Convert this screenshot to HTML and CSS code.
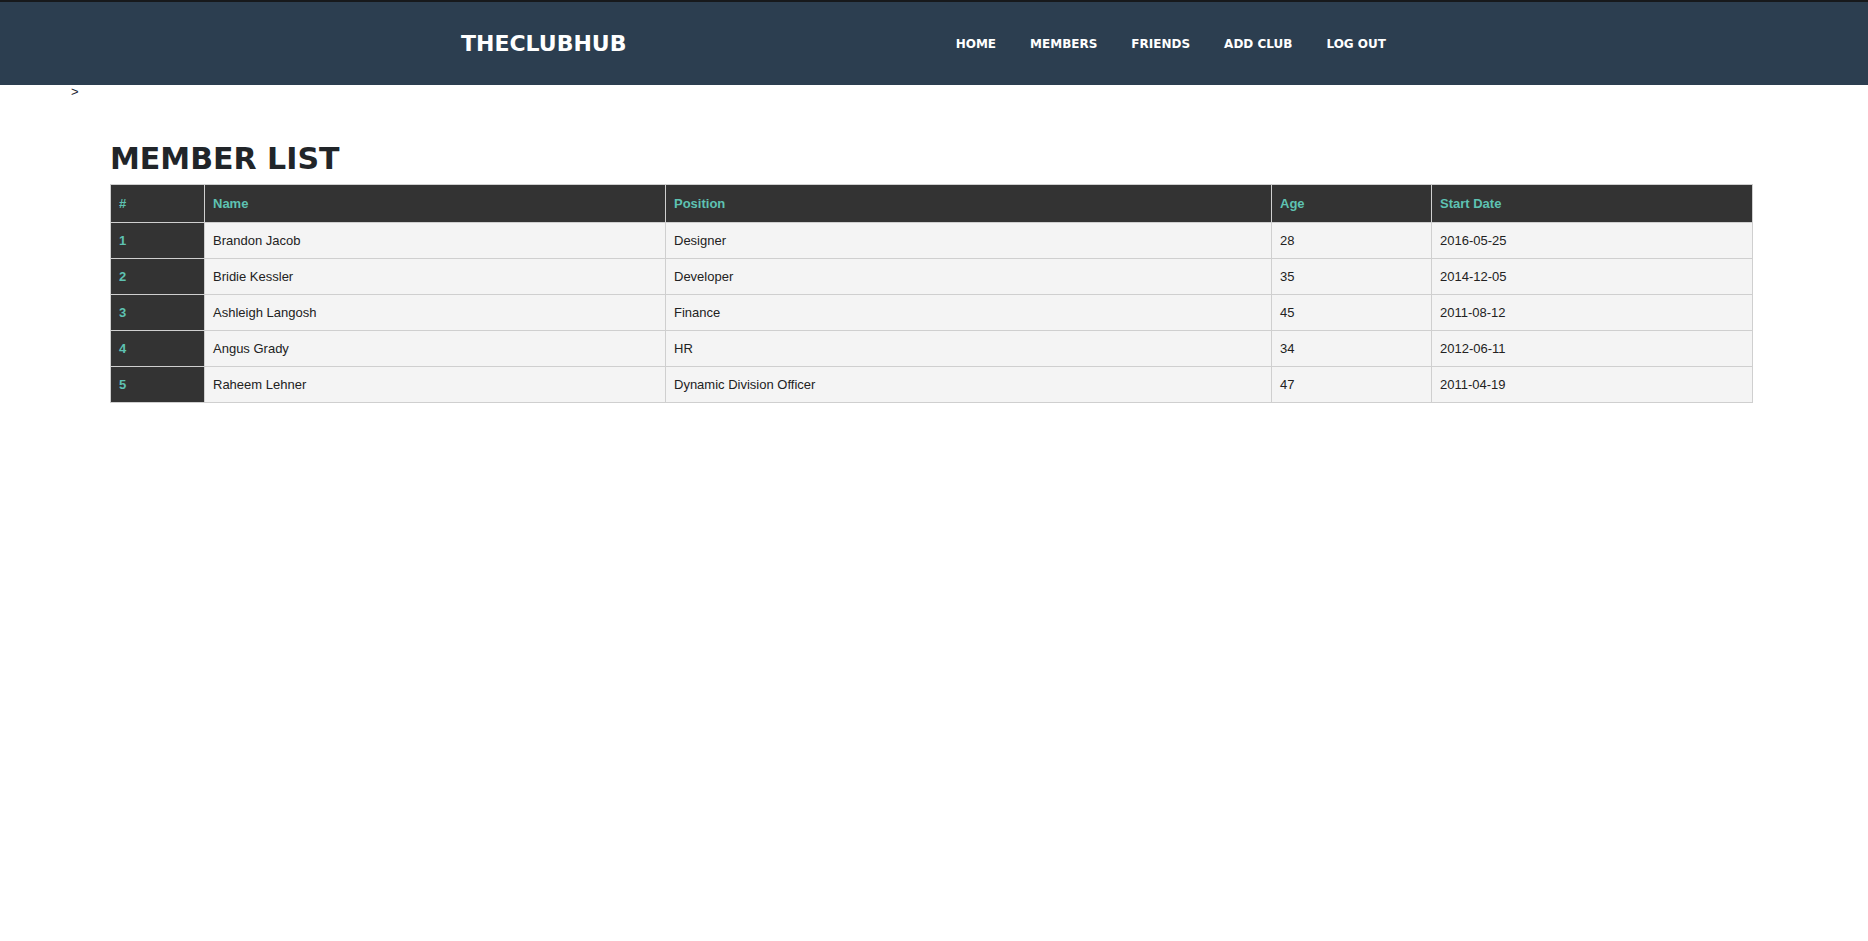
FILE: index.html
```html
<!DOCTYPE html>
<html lang="en">
<head>
<meta charset="utf-8">
<title>TheClubHub - Members</title>
<link rel="stylesheet" href="styles.css">
</head>
<body>
<header class="topbar">
  <div class="topbar-inner">
    <a class="brand" href="#">THECLUBHUB</a>
    <nav class="nav">
      <a href="#">HOME</a>
      <a href="#">MEMBERS</a>
      <a href="#">FRIENDS</a>
      <a href="#">ADD CLUB</a>
      <a href="#">LOG OUT</a>
    </nav>
  </div>
</header>
<div class="stray">&gt;</div>
<main class="content">
  <h1 class="title">MEMBER LIST</h1>
  <table class="members">
    <colgroup>
      <col class="c-num">
      <col class="c-name">
      <col class="c-pos">
      <col class="c-age">
      <col class="c-date">
    </colgroup>
    <thead>
      <tr><th>#</th><th>Name</th><th>Position</th><th>Age</th><th>Start Date</th></tr>
    </thead>
    <tbody>
      <tr><th>1</th><td>Brandon Jacob</td><td>Designer</td><td>28</td><td>2016-05-25</td></tr>
      <tr><th>2</th><td>Bridie Kessler</td><td>Developer</td><td>35</td><td>2014-12-05</td></tr>
      <tr><th>3</th><td>Ashleigh Langosh</td><td>Finance</td><td>45</td><td>2011-08-12</td></tr>
      <tr><th>4</th><td>Angus Grady</td><td>HR</td><td>34</td><td>2012-06-11</td></tr>
      <tr><th>5</th><td>Raheem Lehner</td><td>Dynamic Division Officer</td><td>47</td><td>2011-04-19</td></tr>
    </tbody>
  </table>
</main>
</body>
</html>
```
FILE: styles.css
```css
html, body {
  margin: 0;
  padding: 0;
  background: #ffffff;
}

body {
  font-family: "Liberation Sans", Arial, sans-serif;
  color: #222;
}

.topbar {
  background: #2c3e50;
  border-top: 2px solid #17191c;
  height: 83px;
}

.topbar-inner {
  width: 960px;
  height: 100%;
  margin: 0 auto;
  padding: 0 7px;
  box-sizing: border-box;
  display: flex;
  align-items: center;
}

.brand {
  font-family: "DejaVu Sans", sans-serif;
  font-weight: bold;
  font-size: 22px;
  color: #ffffff;
  text-decoration: none;
}

.nav {
  margin-left: auto;
  display: flex;
  gap: 34px;
  padding-right: 21px;
}

.nav a {
  font-family: "DejaVu Sans", sans-serif;
  font-weight: bold;
  font-size: 12px;
  color: #ffffff;
  text-decoration: none;
}

.stray {
  font-size: 13px;
  line-height: 13px;
  padding-left: 71px;
  color: #1b2430;
}

.content {
  padding: 0 116px 0 110px;
}

.title {
  font-family: "DejaVu Sans", sans-serif;
  font-weight: bold;
  font-size: 30px;
  line-height: 36px;
  color: #212529;
  margin: 43px 0 7px 0;
}

.members {
  width: 100%;
  table-layout: fixed;
  border-collapse: collapse;
  font-size: 13px;
  line-height: 15px;
}

.c-num { width: 94px; }
.c-name { width: 461px; }
.c-pos { width: 606px; }
.c-age { width: 160px; }
.c-date { width: 321px; }

.members th,
.members td {
  border: 1px solid #cfcfcf;
  text-align: left;
  padding: 10px 8px;
}

.members thead th {
  background: #333333;
  color: #5ec2b2;
  font-weight: bold;
  padding: 11px 8px;
}

.members tbody th {
  background: #333333;
  color: #5ec2b2;
  font-weight: bold;
}

.members tbody td {
  background: #f4f4f4;
  color: #222;
}
```
